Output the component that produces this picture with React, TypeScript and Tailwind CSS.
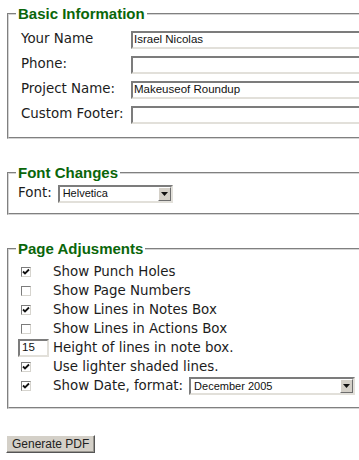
import React from "react";

const inputBorder =
  "border-2 border-t-[#7c7c7c] border-l-[#7c7c7c] border-r-[#e2e0da] border-b-[#e2e0da]";

function TextBox({ value, className }: { value: string; className: string }) {
  return (
    <div
      className={`${inputBorder} ${className} bg-white h-[18px] flex items-center pl-[1px] font-['Liberation_Sans',Arial,sans-serif] text-[11.5px] text-[#111] leading-none`}
    >
      {value}
    </div>
  );
}

function Select({ value, className }: { value: string; className: string }) {
  return (
    <div
      className={`${inputBorder} ${className} bg-white h-[18px] flex items-center justify-between font-['Liberation_Sans',Arial,sans-serif] text-[11px] text-[#111] leading-none`}
    >
      <span className="pl-[3px]">{value}</span>
      <span className="w-[13px] h-[14px] bg-[#d4d0c8] border border-t-white border-l-white border-r-[#6e6e6e] border-b-[#6e6e6e] flex items-center justify-center">
        <svg width="7" height="4" viewBox="0 0 7 4">
          <path d="M0 0 H7 L3.5 4 Z" fill="#111" />
        </svg>
      </span>
    </div>
  );
}

function Check({ checked }: { checked: boolean }) {
  return (
    <span className="w-[10px] h-[10px] bg-white border border-t-[#7c7c7c] border-l-[#7c7c7c] border-r-[#d6d4ce] border-b-[#d6d4ce] flex items-center justify-center">
      {checked && (
        <svg width="8" height="8" viewBox="0 0 8 8">
          <path d="M1 3.5 L3 5.5 L7 1.5" stroke="#111" strokeWidth="1.8" fill="none" />
        </svg>
      )}
    </span>
  );
}

const fieldsetCls =
  "ml-[7px] mr-0 w-[400px] min-w-0 border-2 [border-style:groove] border-[#d4d4d4] pl-[7px] pr-0";
const legendCls =
  "px-[2px] font-['Liberation_Sans',Arial,sans-serif] font-bold text-[15px] leading-[18px] text-[#0a660a]";

export default function App() {
  const checks: { label: React.ReactNode; checked?: boolean; kind?: string }[] = [
    { label: "Show Punch Holes", checked: true },
    { label: "Show Page Numbers", checked: false },
    { label: "Show Lines in Notes Box", checked: true },
    { label: "Show Lines in Actions Box", checked: false },
    { label: "Height of lines in note box.", kind: "num" },
    { label: "Use lighter shaded lines.", checked: true },
    { label: "Show Date, format:", checked: true, kind: "date" },
  ];

  return (
    <div className="w-[359px] h-[460px] overflow-hidden bg-white font-['DejaVu_Sans',Verdana,sans-serif] text-[13.4px] text-[#1c1c1c] pt-[5px]">
      <fieldset className={`${fieldsetCls} pt-[4px] pb-[10px]`}>
        <legend className={legendCls}>Basic Information</legend>
        {[
          ["Your Name", "Israel Nicolas"],
          ["Phone:", ""],
          ["Project Name:", "Makeuseof Roundup"],
          ["Custom Footer:", ""],
        ].map(([l, v]) => (
          <div key={l} className="grid grid-cols-[110px_1fr] items-center h-[25px] pl-[5px]">
            <span>{l}</span>
            <TextBox value={v} className="w-[260px]" />
          </div>
        ))}
      </fieldset>

      <fieldset className={`${fieldsetCls} mt-[25px] pt-[2px] pb-[10px]`}>
        <legend className={legendCls}>Font Changes</legend>
        <div className="flex items-center h-[19px] pl-[2px] gap-[6px]">
          <span>Font:</span>
          <Select value="Helvetica" className="w-[115px]" />
        </div>
      </fieldset>

      <fieldset className={`${fieldsetCls} mt-[25px] pt-[4px] pb-[12px]`}>
        <legend className={legendCls}>Page Adjusments</legend>
        {checks.map((c, i) => (
          <div key={i} className="grid grid-cols-[37px_1fr] items-center h-[19px]">
            {c.kind === "num" ? (
              <TextBox value="15" className="w-[31px] ml-[2px] pl-[2px]" />
            ) : (
              <span className="ml-[5px]">
                <Check checked={!!c.checked} />
              </span>
            )}
            <div className="flex items-center">
              <span>{c.label}</span>
              {c.kind === "date" && (
                <Select value="December 2005" className="w-[166px] ml-[6px]" />
              )}
            </div>
          </div>
        ))}
      </fieldset>

      <button className="ml-[6px] mt-[26px] h-[18px] px-[5px] bg-[#d4d0c8] border border-t-white border-l-white border-r-[#555] border-b-[#555] shadow-[inset_-1px_-1px_0_#9a9790] font-['Liberation_Sans',Arial,sans-serif] text-[12px] leading-none text-[#222]">
        Generate PDF
      </button>
    </div>
  );
}
